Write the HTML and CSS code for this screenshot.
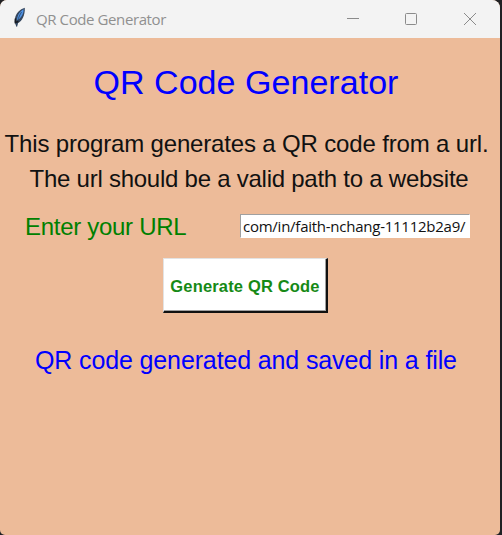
FILE: index.html
```
<!DOCTYPE html>
<html lang="en">
<head>
<meta charset="utf-8">
<title>QR Code Generator</title>
<link rel="stylesheet" href="styles.css">
</head>
<body>
<div class="window">
  <header class="titlebar">
    <svg class="feather" width="16" height="22" viewBox="0 0 16 22">
      <path d="M12.800 .7C8 2 3.500 6.500 3 11.500L2.600 15 4.500 20 6 16C10 14.500 13.200 8 12.800 .7Z" fill="#35475f"/>
      <path d="M11.600 2.300C8 4.500 5.800 7 4.800 13.200 9 11.500 11.800 7 11.600 2.300Z" fill="#4f93e6"/>
      <path d="M9.500 5C7 9 5.500 13 4.800 19.500" stroke="#29425f" stroke-width=".8" fill="none"/>
      <path d="M3.400 11.500 3.400 15.500 6.500 14.500" stroke="#171b22" stroke-width="1.500" fill="none"/>
    </svg>
    <span class="caption">QR Code Generator</span>
    <svg class="controls" width="132" height="14" viewBox="0 0 132 14" fill="none" stroke="#8b8b8b">
      <path d="M0 6.500H12"/>
      <rect x="58.500" y="1.500" width="11" height="11" rx="1"/>
      <path d="M117 1 129 13M129 1 117 13"/>
    </svg>
  </header>
  <main class="content">
    <h1 class="heading">QR Code Generator</h1>
    <p class="intro"><span class="line-one">This program generates a QR code from a url.</span><br><span class="line-two">The url should be a valid path to a website</span></p>
    <div class="field">
      <span class="label">Enter your URL</span>
      <div class="entry"><span>com/in/faith-nchang-11112b2a9/</span></div>
    </div>
    <button class="generate"><span>Generate QR Code</span></button>
    <p class="status">QR code generated and saved in a file</p>
  </main>
</div>
</body>
</html>
```

FILE: styles.css
```
* { box-sizing: border-box; }
body {
  margin: 0;
  height: 535px;
  overflow: hidden;
  background: #202124;
  font-family: "Liberation Sans", Arial, sans-serif;
}
.window {
  width: 500px;
  height: 535px;
  overflow: hidden;
  border-radius: 7px 8px 5px 5px;
  background: #edbb99;
}
.titlebar {
  display: flex;
  align-items: center;
  height: 38px;
  padding: 0 21px 0 12px;
  background: #f3f3f3;
}
.feather { margin-top: -2px; }
.caption {
  margin-left: 8px;
  color: #909090;
  font: 15px/20px "Open Sans", "Noto Sans", sans-serif;
  letter-spacing: -.4px;
  white-space: nowrap;
}
.controls { margin-left: auto; }
.content {
  display: flex;
  flex-direction: column;
  align-items: flex-start;
  white-space: nowrap;
}
.heading {
  margin: 24px 0 0 93.500px;
  color: #00f;
  font-size: 34px;
  font-weight: 400;
  line-height: 40px;
  letter-spacing: .04px;
}
.intro {
  width: 493px;
  margin: 24px 0 0;
  color: #111;
  font-size: 24px;
  line-height: 35px;
  text-align: center;
}
.line-one { letter-spacing: -.16px; }
.line-two { margin-left: 5px; letter-spacing: -.25px; }
.field {
  display: flex;
  align-items: center;
  width: 470px;
  height: 30px;
  margin-top: 16px;
  padding-left: 25px;
}
.label {
  color: #008000;
  font-size: 24px;
  letter-spacing: -.29px;
}
.entry {
  width: 230px;
  height: 24px;
  margin: -2px 0 0 auto;
  padding-left: 2px;
  border: 1px solid #fff;
  border-top-color: #a0a0a0;
  border-left-color: #a0a0a0;
  background: #fff;
  color: #111;
  font: 15px/22px "Open Sans", sans-serif;
  letter-spacing: -.25px;
}
.generate {
  width: 165px;
  height: 55px;
  margin: 16px 0 0 163px;
  padding: 2px 0 0;
  border: 1px solid #e3e3e3;
  border-right: 2px solid #111;
  border-bottom: 2px solid #111;
  box-shadow: inset -1px -1px #a0a0a0;
  background: #fff;
  color: #168a16;
  font: bold 16.500px "Liberation Sans", Arial, sans-serif;
  letter-spacing: .16px;
}
.status {
  margin: 32px 0 0 35px;
  color: #00f;
  font-size: 25px;
  line-height: 30px;
  letter-spacing: -.13px;
}
```
